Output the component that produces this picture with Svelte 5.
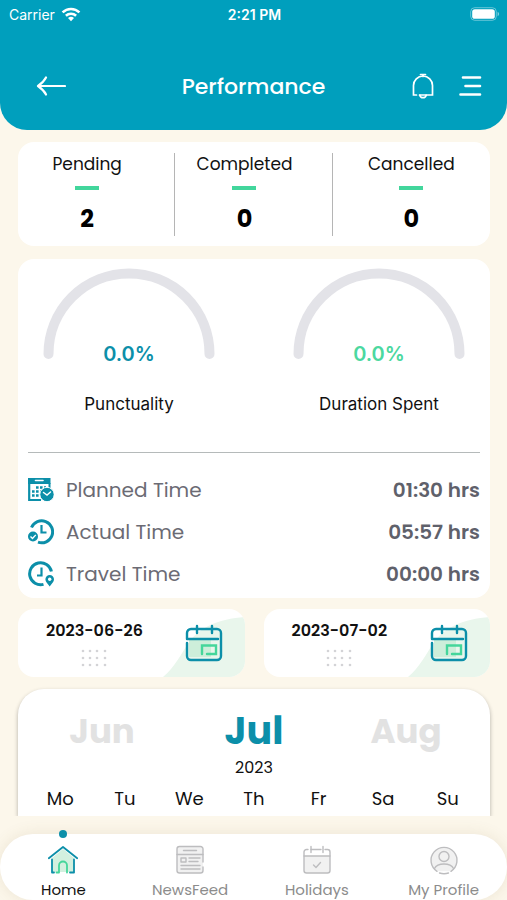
<script lang="ts">
    let stats = [
        { label: 'Pending', value: 2 },
        { label: 'Completed', value: 0 },
        { label: 'Cancelled', value: 0 },
    ];
    let gauges = [
        { label: 'Punctuality', value: '0.0%', tone: 'teal' },
        { label: 'Duration Spent', value: '0.0%', tone: 'green' },
    ];
    let times = [
        { icon: 'planned', label: 'Planned Time', value: '01:30 hrs' },
        { icon: 'actual', label: 'Actual Time', value: '05:57 hrs' },
        { icon: 'travel', label: 'Travel Time', value: '00:00 hrs' },
    ];
    let dates = ['2023-06-26', '2023-07-02'];
    let weekdays = ['Mo', 'Tu', 'We', 'Th', 'Fr', 'Sa', 'Su'];
    let tabs = ['Home', 'NewsFeed', 'Holidays', 'My Profile'];

    let active = $state('Home');
</script>

<div class="app">
    <header>
        <div class="status">
            <span class="carrier">
                Carrier
                <svg width="20" height="15" viewBox="0 0 20 15" fill="none" stroke="#fff" stroke-width="2.6">
                    <path d="M1.6 5.4a12 12 0 0 1 16.8 0" />
                    <path d="M4.9 8.8a7.4 7.4 0 0 1 10.2 0" />
                    <path d="M10 14.2l-3-3.1a4.3 4.3 0 0 1 6 0z" fill="#fff" stroke="none" />
                </svg>
            </span>
            <span class="clock">2:21 PM</span>
            <span class="battery">
                <svg width="30" height="14" viewBox="0 0 30 14">
                    <rect x="0.7" y="0.7" width="25.6" height="12.6" rx="4" fill="none" stroke="#fff" stroke-opacity="0.4" />
                    <rect x="2.2" y="2.2" width="22.6" height="9.6" rx="2.6" fill="#fff" />
                    <path d="M27.6 4.8c2 .8 2 3.6 0 4.4z" fill="#fff" fill-opacity="0.5" />
                </svg>
            </span>
        </div>
        <div class="titlebar">
            <button class="plain back" aria-label="Back">
                <svg width="30" height="20" viewBox="0 0 30 20" fill="none" stroke="#fff" stroke-width="2.2" stroke-linecap="round" stroke-linejoin="round">
                    <path d="M29 10H2M10 1.5C8.5 4.5 5.5 7.5 2 10C5.5 12.5 8.5 15.5 10 18.5" />
                </svg>
            </button>
            <h1>Performance</h1>
            <div class="actions">
                <button class="plain" aria-label="Notifications">
                    <svg width="24" height="28" viewBox="0 0 24 28" fill="none" stroke="#fff" stroke-width="1.7" stroke-linecap="round">
                        <path d="M9.5 2.5h5M12 2.5v2" />
                        <path d="M5.5 23H2.5V13.5a9.5 9.5 0 0 1 19 0V23H8.5" />
                        <path d="M8.8 23.2a3.3 3.3 0 0 0 6.4 0" />
                    </svg>
                </button>
                <button class="plain" aria-label="Menu">
                    <svg width="24" height="22" viewBox="0 0 24 22" stroke="#fff" stroke-width="2.6" stroke-linecap="round">
                        <path d="M5 2.5h17M7.500 11h14.5M2.500 19.5h19.5" />
                    </svg>
                </button>
            </div>
        </div>
    </header>

    <main>
        <section class="card stats">
            {#each stats as s}
                <div class="stat">
                    <span class="stat-label">{s.label}</span>
                    <span class="bar"></span>
                    <strong>{s.value}</strong>
                </div>
            {/each}
        </section>

        <section class="card summary">
            <div class="gauges">
                {#each gauges as g}
                    <div class="gauge">
                        <svg width="172" height="92" viewBox="0 0 172 92" fill="none">
                            <path d="M5.5 86a80.5 80.5 0 0 1 161 0" stroke="#e3e3e8" stroke-width="10" stroke-linecap="round" />
                        </svg>
                        <span class="percent {g.tone}">{g.value}</span>
                        <span class="gauge-label">{g.label}</span>
                    </div>
                {/each}
            </div>
            <hr />
            <dl>
                {#each times as t}
                    <div class="time">
                        <dt>
                            <svg width="26" height="26" viewBox="0 0 26 26" fill="none" stroke="#0c8fa9" stroke-width="3">
                                {#if t.icon === 'planned'}
                                    <path d="M13 23H1.2V6" stroke-width="2.2" />
                                    <path d="M0 1h22.5v6H0z" fill="#0c8fa9" stroke="none" />
                                    <path d="M21.5 6v5" stroke-width="2" />
                                    <path d="M7.5 3.5h7.5" stroke="#fff" stroke-width="1.6" stroke-linecap="round" />
                                    <path d="M8 10.5h10M4 14.5h10M4 18.5h7" stroke-width="2.6" stroke-dasharray="2.6 1.4" />
                                    <circle cx="19" cy="17.5" r="7.2" fill="#0c8fa9" stroke="#fff" stroke-width="1" />
                                    <path d="M15.5 15.5l3.5 2.5 3.5-3" stroke="#fff" stroke-width="1.5" stroke-linecap="round" />
                                {:else if t.icon === 'actual'}
                                    <path d="M3.5 8.5A11 11 0 1 1 10 23.2" />
                                    <path d="M13.5 6v7.5h5" stroke-width="2.2" />
                                    <circle cx="5" cy="17.5" r="5" fill="#0c8fa9" stroke="none" />
                                    <path d="M2.5 17.5l2 2 3.3-3.6" stroke="#fff" stroke-width="1.4" />
                                {:else}
                                    <path d="M15.5 23.4A11 11 0 1 1 23.4 10.5" />
                                    <path d="M13.5 6.500v8H9" stroke-width="2.2" />
                                    <path d="M21.7 25.5c-2.5-3-4.3-5-4.3-7.2a4.3 4.3 0 0 1 8.6 0c0 2.2-1.8 4.2-4.3 7.2z" fill="#0c8fa9" stroke="none" />
                                    <circle cx="21.7" cy="18.2" r="1.7" fill="#fff" stroke="none" />
                                {/if}
                            </svg>
                            {t.label}
                        </dt>
                        <dd>{t.value}</dd>
                    </div>
                {/each}
            </dl>
        </section>

        <div class="dates">
            {#each dates as d}
                <button class="card date">
                    <span class="date-body">
                        <span>{d}</span>
                        <svg width="26" height="18" viewBox="0 0 26 18" fill="#d3d3d6">
                            {#each [2, 9, 16] as y}
                                {#each [2, 9, 16, 24] as x}
                                    <circle cx={x} cy={y} r="1.3" />
                                {/each}
                            {/each}
                        </svg>
                    </span>
                    <span class="date-icon">
                        <svg class="corner" viewBox="0 0 84 60" preserveAspectRatio="none" fill="#e9f6ec">
                            <path d="M0 60C12 50 18 38 26 26C38 10 56 2 84 0V60z" />
                        </svg>
                        <svg class="cal" width="38" height="38" viewBox="0 0 38 38" fill="none" stroke="#0c8fa9" stroke-width="2.4" stroke-linecap="round" stroke-linejoin="round">
                            <path d="M4 16h22v17H4z" fill="#cdeeda" stroke="none" />
                            <path d="M2 15h31M8 5H6a4 4 0 0 0-4 4v6M15 5h10M31 5h1a4 4 0 0 1 4 4v23a4 4 0 0 1-4 4H6a4 4 0 0 1-4-4V19M8 5h7M25 5h6" />
                            <path d="M12 2v7M27 2v7" />
                            <path d="M17 30V21.5h14v8.500H22" stroke="#45d69b" stroke-linejoin="miter" />
                        </svg>
                    </span>
                </button>
            {/each}
        </div>

        <section class="calendar">
            <div class="months">
                <button class="plain month">Jun</button>
                <h2>Jul</h2>
                <button class="plain month">Aug</button>
            </div>
            <p class="year">2023</p>
            <div class="week">
                {#each weekdays as w}
                    <span>{w}</span>
                {/each}
            </div>
        </section>
    </main>

    <nav>
        {#each tabs as tab}
            <button class="plain tab" class:active={active === tab} onclick={() => (active = tab)}>
                <svg width="30" height="30" viewBox="0 0 30 30" fill="none" stroke="#bdbdbf" stroke-width="1.4" stroke-linecap="round" stroke-linejoin="round">
                    {#if tab === 'Home'}
                        <path d="M4 13L15 4l11 9v14H4z" fill="#d3f0df" stroke="none" />
                        <path d="M0.8 13.2L15 2l14.2 11.2" stroke="#0c8fa9" stroke-width="1.8" />
                        <path d="M6 27.5H4V14.5M26 14.5v13h-4" stroke="#0c8fa9" stroke-width="1.8" />
                        <path d="M8.5 27.5h2.5v-7a4 4 0 0 1 8 0v7" stroke="#45d69b" stroke-width="1.8" />
                    {:else if tab === 'NewsFeed'}
                        <path d="M28 17V4a2.5 2.5 0 0 0-2.5-2.5h-21A2.5 2.5 0 0 0 2 4v21.5A2.5 2.5 0 0 0 4.5 28h21a2.5 2.5 0 0 0 2.5-2.5V22" fill="#f1f1f1" />
                        <path d="M2 9.5h26M8.5 5.5h13" />
                        <rect x="6" y="13" width="5" height="4" />
                        <path d="M14 13h11M14 16.5h9M6 20.5h19M6 24h19" />
                    {:else if tab === 'Holidays'}
                        <path d="M2 11h26v14.5a2.5 2.5 0 0 1-2.5 2.5h-21A2.5 2.5 0 0 1 2 25.5z" fill="#f1f1f1" />
                        <path d="M2 11V7a2.5 2.5 0 0 1 2.5-2.5H6M9 4.5h10M23 4.5h2.5A2.5 2.5 0 0 1 28 7v4" />
                        <path d="M9 1.5v6M21 1.5v6M11.5 20l2.5 2.5 4.5-5" />
                    {:else}
                        <path d="M8 26.3A13 13 0 1 1 22 26.3" fill="#f1f1f1" />
                        <circle cx="15" cy="11.5" r="5" />
                        <path d="M5.5 23.5c1.5-3 5-4.5 9.5-4.5s8 1.5 9.5 4.5M10.5 28c3 1 6 1 9 0" />
                    {/if}
                </svg>
                {tab}
            </button>
        {/each}
    </nav>
</div>

<style>
:global(body) {
    margin: 0;
    background: #fcf7eb;
}

.app {
    height: 100vh;
    display: flex;
    flex-direction: column;
    background: #fcf7eb;
    font-family: Poppins, Inter, "Liberation Sans", sans-serif;
    color: #111;
}

svg {
    display: block;
    flex: none;
}

button {
    font: inherit;
    color: inherit;
    border: 0;
    padding: 0;
    cursor: pointer;
}

.plain {
    background: none;
}

header {
    flex: none;
    background: #009fbd;
    color: #fff;
    border-radius: 0 0 27px 27px;
    padding-bottom: 26px;
}

.status {
    display: grid;
    grid-template-columns: 1fr auto 1fr;
    align-items: center;
    height: 28px;
    padding: 0 7px 0 9px;
    font-family: Inter, "Liberation Sans", sans-serif;
    font-size: 14px;
}

.carrier {
    display: flex;
    align-items: center;
    gap: 6px;
}

.clock {
    font-weight: 600;
}

.battery {
    justify-self: end;
}

.titlebar {
    display: grid;
    grid-template-columns: 1fr auto 1fr;
    align-items: center;
    height: 36px;
    margin-top: 40px;
    padding: 0 25px;
}

.back {
    justify-self: start;
    padding-left: 11px;
}

h1 {
    margin: 0;
    font-size: 22px;
    font-weight: 500;
}

.actions {
    display: flex;
    justify-content: flex-end;
    align-items: center;
    gap: 23px;
}

main {
    flex: 1;
    min-height: 0;
    overflow: hidden;
    display: flex;
    flex-direction: column;
    padding: 12px 17px 0 18px;
}

.card {
    background: #fff;
    border-radius: 16px;
}

.stats {
    display: grid;
    grid-template-columns: repeat(3, 1fr);
    padding: 11px 0 10px;
}

.stat {
    display: flex;
    flex-direction: column;
    align-items: center;
    padding-bottom: 2px;
}

.stat:not(:last-child) {
    padding-right: 18px;
    border-right: 1px solid #b5b5b5;
}

.stat-label {
    font-size: 17px;
    line-height: 22px;
}

.bar {
    width: 24px;
    height: 4px;
    margin: 11px 0 14px;
    background: #42d69c;
}

strong {
    font-size: 24px;
    line-height: 30px;
    font-weight: 700;
    color: #000;
}

.summary {
    margin-top: 13px;
    padding: 9px 10px 3px;
}

.gauges {
    display: flex;
    justify-content: space-between;
    padding: 0 15px;
}

.gauge {
    display: flex;
    flex-direction: column;
    align-items: center;
}

.percent {
    margin-top: -18px;
    font-family: Inter, "Liberation Sans", sans-serif;
    font-size: 20px;
    line-height: 24px;
    font-weight: 600;
}

.teal {
    color: #0c8fa9;
}

.green {
    color: #4bd8a0;
}

.gauge-label {
    margin-top: 28px;
    font-family: Inter, "Liberation Sans", sans-serif;
    font-size: 17px;
    line-height: 20px;
}

hr {
    margin: 38px 0 16px;
    border: 0;
    border-top: 1px solid #b5baba;
}

dl {
    margin: 0;
}

.time {
    display: flex;
    align-items: center;
    justify-content: space-between;
    height: 42px;
    font-size: 20px;
    color: #6b6b74;
}

dt {
    display: flex;
    align-items: center;
    gap: 12px;
}

dd {
    margin: 0;
    font-weight: 600;
    color: #5f616b;
}

.dates {
    display: flex;
    gap: 19px;
    margin-top: 11px;
}

.date {
    flex: 1;
    display: flex;
    justify-content: space-between;
    height: 68px;
    overflow: hidden;
}

.date-body {
    display: flex;
    flex-direction: column;
    align-items: center;
    gap: 8px;
    padding: 12px 0 0 28px;
    font-size: 16px;
    line-height: 20px;
    font-weight: 600;
}

.date-icon {
    position: relative;
    display: flex;
    align-items: center;
    justify-content: center;
    width: 82px;
    height: 68px;
}

.corner {
    position: absolute;
    right: 0;
    bottom: 0;
    width: 100%;
    height: 60px;
}

.cal {
    position: relative;
}

.calendar {
    flex: 1 0 auto;
    margin-top: 12px;
    padding: 22px 8px 0;
    background: #fff;
    border-radius: 26px 26px 0 0;
    box-shadow: 0 2px 4px rgba(0, 0, 0, 0.3);
}

.months {
    display: grid;
    grid-template-columns: repeat(3, 1fr);
    align-items: center;
    text-align: center;
    line-height: 40px;
}

.month {
    font-size: 34px;
    font-weight: 700;
    color: #e2e2e2;
}

h2 {
    margin: 0;
    font-size: 38px;
    font-weight: 700;
    color: #0c8fa9;
}

.year {
    margin: 7px 0 9px;
    text-align: center;
    font-size: 16px;
    line-height: 20px;
}

.week {
    display: grid;
    grid-template-columns: repeat(7, 1fr);
    padding: 0 2px;
    text-align: center;
    font-size: 18px;
    line-height: 24px;
}

nav {
    flex: none;
    display: flex;
    height: 66px;
    margin-top: 18px;
    background: #fff;
    border-radius: 33px;
    box-shadow: 0 0 16px rgba(120, 100, 50, 0.12);
}

.tab {
    position: relative;
    flex: 1;
    display: flex;
    flex-direction: column;
    align-items: center;
    gap: 5px;
    padding-top: 11px;
    font-size: 15px;
    line-height: 20px;
    color: #8c8c8c;
}

.tab.active {
    color: #111;
}

.tab.active::before {
    content: "";
    position: absolute;
    top: -4px;
    width: 8px;
    height: 8px;
    border-radius: 50%;
    background: #0c8fa9;
}
</style>
